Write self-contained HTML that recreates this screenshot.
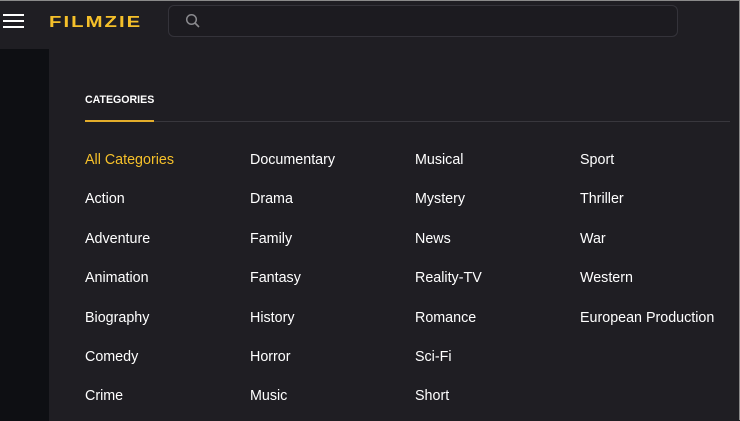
<!DOCTYPE html>
<html><head><meta charset="utf-8"><style>
*{margin:0;padding:0;box-sizing:border-box}
body{width:740px;height:420px;overflow:hidden;background:#1f1e23;font-family:"Liberation Sans",Arial,sans-serif;position:relative;border-top:1px solid #8a8a8a;border-right:1px solid #8a8a8a}
.side{position:absolute;left:0;top:48px;width:49px;height:372px;background:#0e0f13}
.ham{position:absolute;left:3px;top:13px;width:21px}
.ham i{display:block;height:2px;background:#fff;margin-bottom:4px}
.logo{position:absolute;left:49px;top:13px;color:#f5c02a;font-weight:bold;font-size:16px;letter-spacing:1.6px;transform:scaleX(1.27);transform-origin:left top}
.search{position:absolute;left:168px;top:4px;width:510px;height:32px;border:1px solid #34333a;border-radius:6px;background:#1c1b20}
.cat{position:absolute;left:85px;top:93px;color:#fff;font-weight:bold;font-size:10.6px}
.line{position:absolute;left:85px;top:120px;width:645px;height:1px;background:#38373d}
.uline{position:absolute;left:85px;top:119px;width:69px;height:2px;background:#e3ad2b}
.it{position:absolute;color:#fff;font-size:14.3px;line-height:18px}
</style></head><body>
<div class="side"></div>
<div class="ham"><i></i><i></i><i></i></div>
<div class="logo">FILMZIE</div>
<div class="search"><svg style="position:absolute;left:16px;top:7px" width="16" height="16" viewBox="0 0 16 16"><circle cx="6.5" cy="6.5" r="4.8" fill="none" stroke="#8a8a8e" stroke-width="1.5"/><line x1="10" y1="10" x2="14" y2="14" stroke="#8a8a8e" stroke-width="1.6"/></svg></div>
<div class="cat">CATEGORIES</div>
<div class="line"></div><div class="uline"></div>
<div class="it" style="left:85px;top:150px;color:#f5c02a">All Categories</div>
<div class="it" style="left:85px;top:189px">Action</div>
<div class="it" style="left:85px;top:229px">Adventure</div>
<div class="it" style="left:85px;top:268px">Animation</div>
<div class="it" style="left:85px;top:308px">Biography</div>
<div class="it" style="left:85px;top:347px">Comedy</div>
<div class="it" style="left:85px;top:386px">Crime</div>
<div class="it" style="left:250px;top:150px">Documentary</div>
<div class="it" style="left:250px;top:189px">Drama</div>
<div class="it" style="left:250px;top:229px">Family</div>
<div class="it" style="left:250px;top:268px">Fantasy</div>
<div class="it" style="left:250px;top:308px">History</div>
<div class="it" style="left:250px;top:347px">Horror</div>
<div class="it" style="left:250px;top:386px">Music</div>
<div class="it" style="left:415px;top:150px">Musical</div>
<div class="it" style="left:415px;top:189px">Mystery</div>
<div class="it" style="left:415px;top:229px">News</div>
<div class="it" style="left:415px;top:268px">Reality-TV</div>
<div class="it" style="left:415px;top:308px">Romance</div>
<div class="it" style="left:415px;top:347px">Sci-Fi</div>
<div class="it" style="left:415px;top:386px">Short</div>
<div class="it" style="left:580px;top:150px">Sport</div>
<div class="it" style="left:580px;top:189px">Thriller</div>
<div class="it" style="left:580px;top:229px">War</div>
<div class="it" style="left:580px;top:268px">Western</div>
<div class="it" style="left:580px;top:308px">European Production</div>
</body></html>
